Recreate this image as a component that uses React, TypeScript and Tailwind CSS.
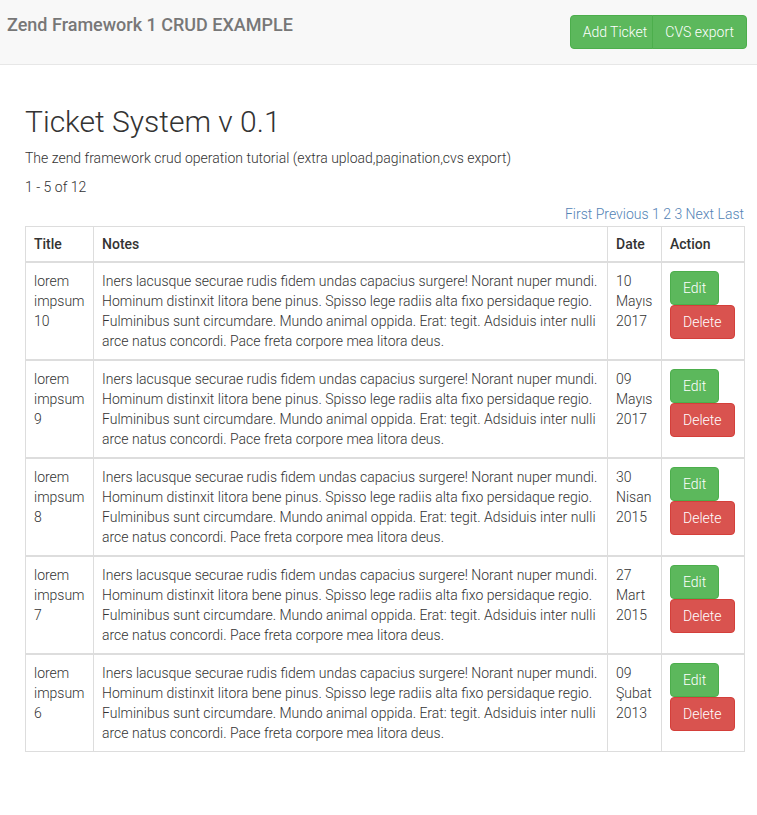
import React from "react";

const notes =
  "Iners lacusque securae rudis fidem undas capacius surgere! Norant nuper mundi. Hominum distinxit litora bene pinus. Spisso lege radiis alta fixo persidaque regio. Fulminibus sunt circumdare. Mundo animal oppida. Erat: tegit. Adsiduis inter nulli arce natus concordi. Pace freta corpore mea litora deus.";

const rows = [
  { title: "lorem impsum 10", date: ["10", "Mayıs", "2017"] },
  { title: "lorem impsum 9", date: ["09", "Mayıs", "2017"] },
  { title: "lorem impsum 8", date: ["30", "Nisan", "2015"] },
  { title: "lorem impsum 7", date: ["27", "Mart", "2015"] },
  { title: "lorem impsum 6", date: ["09", "Şubat", "2013"] },
];

export default function App() {
  return (
    <div
      className="min-h-[815px] bg-white text-[14px] font-light leading-[20px] text-[#333]"
      style={{ fontFamily: "Roboto, 'Liberation Sans', sans-serif" }}
    >
      <nav className="flex h-[65px] items-start justify-between border-b border-[#e7e7e7] bg-[#f8f8f8]">
        <div className="pl-[7px] pt-[14px] text-[18px] font-medium leading-[22px] text-[#777]">
          Zend Framework 1 CRUD EXAMPLE
        </div>
        <div className="mr-[10px] mt-[15px] flex">
          <button className="h-[34px] rounded-l-[4px] border border-[#4cae4c] bg-[#5cb85c] pl-[12px] pr-[5px] font-light text-white">
            Add Ticket
          </button>
          <button className="-ml-px h-[34px] rounded-r-[4px] border border-[#4cae4c] bg-[#5cb85c] px-[12px] font-light text-white">
            CVS export
          </button>
        </div>
      </nav>

      <div className="ml-[25px] mr-[12px]">
        <h1 className="mt-[37px] text-[30px] font-light leading-[40px] text-[#333]">
          Ticket System v 0.1
        </h1>
        <p className="mt-[6px]">
          The zend framework crud operation tutorial (extra upload,pagination,cvs export)
        </p>
        <p className="mt-[9px]">1 - 5 of 12</p>
        <div className="mt-[7px] pr-px text-right text-[#5383b5]">
          <span>First</span> <span>Previous</span> <span>1</span> <span>2</span>{" "}
          <span>3</span> <span>Next</span> <span>Last</span>
        </div>
        <table className="mt-[2px] w-full table-fixed border-collapse border border-[#ddd]">
          <colgroup>
            <col className="w-[68px]" />
            <col />
            <col className="w-[54px]" />
            <col className="w-[83px]" />
          </colgroup>
          <thead>
            <tr>
              <th className="border border-b-2 border-[#ddd] px-[8px] pb-[7px] pt-[7px] text-left font-medium">Title</th>
              <th className="border border-b-2 border-[#ddd] px-[8px] pb-[7px] pt-[7px] text-left font-medium">Notes</th>
              <th className="border border-b-2 border-[#ddd] px-[8px] pb-[7px] pt-[7px] text-left font-medium">Date</th>
              <th className="border border-b-2 border-[#ddd] px-[8px] pb-[7px] pt-[7px] text-left font-medium">Action</th>
            </tr>
          </thead>
          <tbody>
            {rows.map((r, i) => (
              <tr key={i}>
                <td className="border border-t-2 border-[#ddd] p-[8px] align-top">{r.title}</td>
                <td className="border border-t-2 border-[#ddd] p-[8px] align-top">{notes}</td>
                <td className="border border-t-2 border-[#ddd] p-[8px] align-top">
                  {r.date.map((d, j) => (
                    <div key={j}>{d}</div>
                  ))}
                </td>
                <td className="border border-t-2 border-[#ddd] p-[8px] align-top">
                  <div className="flex flex-col items-start">
                    <button className="h-[34px] rounded-[4px] border border-[#4cae4c] bg-[#5cb85c] px-[12px] font-light text-white">
                      Edit
                    </button>
                    <button className="h-[34px] rounded-[4px] border border-[#d43f3a] bg-[#d9534f] px-[12px] font-light text-white">
                      Delete
                    </button>
                  </div>
                </td>
              </tr>
            ))}
          </tbody>
        </table>
      </div>
    </div>
  );
}
